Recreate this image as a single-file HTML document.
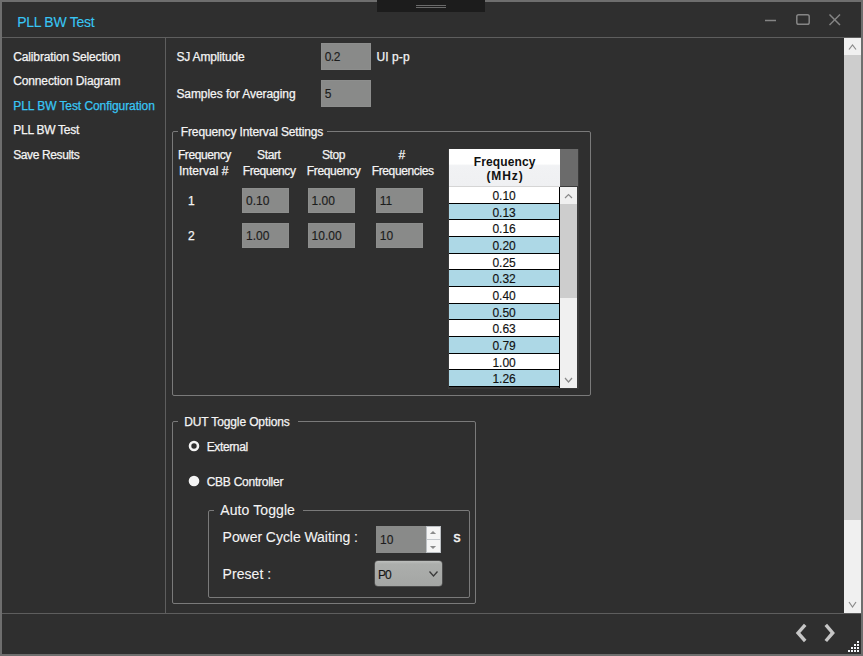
<!DOCTYPE html>
<html><head><meta charset="utf-8"><style>
html,body{margin:0;padding:0;width:863px;height:656px;overflow:hidden;background:#2f2f2f;}
body{position:relative;font-family:"Liberation Sans",sans-serif;}
.t{position:absolute;white-space:nowrap;}
</style></head><body>
<div style="position:absolute;left:0px;top:0px;width:863px;height:656px;background:#6e6e6e;"></div>
<div style="position:absolute;left:2px;top:2px;width:859px;height:652px;background:#2f2f2f;"></div>
<div style="position:absolute;left:377px;top:0px;width:108px;height:12px;background:#1c1c1c;"></div>
<div style="position:absolute;left:416px;top:5px;width:30px;height:1px;background:#6a6a6a;"></div>
<div style="position:absolute;left:416px;top:7px;width:30px;height:1px;background:#6a6a6a;"></div>
<div class="t" style="left:17.2px;top:15px;font-size:14px;line-height:14px;color:#38c6f4;font-weight:400;letter-spacing:-0.28px;-webkit-text-stroke:0.1px #38c6f4;">PLL BW Test</div>
<svg style="position:absolute;left:0;top:0" width="863" height="40">
<g stroke="#858585" fill="none" stroke-width="1.5">
<line x1="765" y1="20.5" x2="776" y2="20.5"/>
<rect x="796.8" y="14.8" width="12.4" height="9.4" rx="1.8"/>
<line x1="829.5" y1="14.5" x2="840" y2="25"/>
<line x1="840" y1="14.5" x2="829.5" y2="25"/>
</g></svg>
<div style="position:absolute;left:2px;top:37px;width:859px;height:1px;background:#5e5e5e;"></div>
<div style="position:absolute;left:165px;top:38px;width:1px;height:575px;background:#5e5e5e;"></div>
<div style="position:absolute;left:2px;top:613px;width:859px;height:1px;background:#5e5e5e;"></div>
<div class="t" style="left:13.3px;top:51px;font-size:12px;line-height:12px;color:#f4f4f4;font-weight:400;letter-spacing:-0.15px;-webkit-text-stroke:0.25px #f4f4f4;">Calibration Selection</div>
<div class="t" style="left:13.2px;top:75px;font-size:12px;line-height:12px;color:#f4f4f4;font-weight:400;letter-spacing:-0.129px;-webkit-text-stroke:0.25px #f4f4f4;">Connection Diagram</div>
<div class="t" style="left:13.3px;top:100px;font-size:12px;line-height:12px;color:#38c6f4;font-weight:400;letter-spacing:-0.079px;-webkit-text-stroke:0.25px #38c6f4;">PLL BW Test Configuration</div>
<div class="t" style="left:13.3px;top:124px;font-size:12px;line-height:12px;color:#f4f4f4;font-weight:400;letter-spacing:-0.27px;-webkit-text-stroke:0.25px #f4f4f4;">PLL BW Test</div>
<div class="t" style="left:13.2px;top:149px;font-size:12px;line-height:12px;color:#f4f4f4;font-weight:400;letter-spacing:-0.373px;-webkit-text-stroke:0.25px #f4f4f4;">Save Results</div>
<div style="position:absolute;left:844px;top:38px;width:17px;height:575px;background:#f0f0f0;"></div>
<div style="position:absolute;left:844px;top:55px;width:17px;height:465px;background:#cdcdcd;"></div>
<svg style="position:absolute;left:844px;top:38px" width="17" height="575">
<g stroke="#8a8a8a" fill="none" stroke-width="1.2">
<polyline points="5,11.5 8.5,7 12,11.5"/>
<polyline points="5,564 8.5,569 12,564"/>
</g></svg>
<svg style="position:absolute;left:780px;top:614px" width="83" height="42">
<g stroke="#c6c6c6" fill="none" stroke-width="3.4" stroke-linecap="butt">
<polyline points="25.2,10.9 18.05,18.95 25.2,27"/>
<polyline points="45.8,10.9 52.7,18.95 45.8,27"/>
</g>
</svg>
<div style="position:absolute;left:857px;top:641px;width:2px;height:2px;background:#f4f6fa;"></div>
<div style="position:absolute;left:854px;top:644px;width:2px;height:2px;background:#f4f6fa;"></div>
<div style="position:absolute;left:857px;top:644px;width:2px;height:2px;background:#f4f6fa;"></div>
<div style="position:absolute;left:851px;top:647px;width:2px;height:2px;background:#f4f6fa;"></div>
<div style="position:absolute;left:854px;top:647px;width:2px;height:2px;background:#f4f6fa;"></div>
<div style="position:absolute;left:857px;top:647px;width:2px;height:2px;background:#f4f6fa;"></div>
<div style="position:absolute;left:848px;top:650px;width:2px;height:2px;background:#f4f6fa;"></div>
<div style="position:absolute;left:851px;top:650px;width:2px;height:2px;background:#f4f6fa;"></div>
<div style="position:absolute;left:854px;top:650px;width:2px;height:2px;background:#f4f6fa;"></div>
<div style="position:absolute;left:857px;top:650px;width:2px;height:2px;background:#f4f6fa;"></div>
<div class="t" style="left:176.4px;top:51px;font-size:12px;line-height:12px;color:#f4f4f4;font-weight:400;letter-spacing:-0.155px;-webkit-text-stroke:0.25px #f4f4f4;">SJ Amplitude</div>
<div class="t" style="left:176.4px;top:88px;font-size:12px;line-height:12px;color:#f4f4f4;font-weight:400;letter-spacing:-0.065px;-webkit-text-stroke:0.25px #f4f4f4;">Samples for Averaging</div>
<div style="position:absolute;left:321px;top:43px;width:50px;height:27px;background:#898a89;box-sizing:border-box;border:1px solid #8d8e8d;"></div>
<div class="t" style="left:324.7px;top:51px;font-size:12px;line-height:12px;color:#1c1c1c;font-weight:400;letter-spacing:-0.5px;-webkit-text-stroke:0.15px #1c1c1c;">0.2</div>
<div style="position:absolute;left:321px;top:80px;width:50px;height:27px;background:#898a89;box-sizing:border-box;border:1px solid #8d8e8d;"></div>
<div class="t" style="left:324.7px;top:88px;font-size:12px;line-height:12px;color:#1c1c1c;font-weight:400;letter-spacing:0px;-webkit-text-stroke:0.15px #1c1c1c;">5</div>
<div class="t" style="left:376.5px;top:51px;font-size:12px;line-height:12px;color:#f4f4f4;font-weight:400;letter-spacing:0.08px;-webkit-text-stroke:0.25px #f4f4f4;">UI p-p</div>
<div style="position:absolute;left:172px;top:131px;width:419px;height:265px;box-sizing:border-box;border:1px solid #7a7a7a;border-radius:2px;"></div>
<div style="position:absolute;left:178px;top:130px;width:149px;height:3px;background:#2f2f2f;"></div>
<div class="t" style="left:180.8px;top:126px;font-size:12px;line-height:12px;color:#f4f4f4;font-weight:400;letter-spacing:-0.135px;-webkit-text-stroke:0.25px #f4f4f4;">Frequency Interval Settings</div>
<div class="t" style="left:177.9px;top:149px;font-size:12px;line-height:12px;color:#f4f4f4;font-weight:400;letter-spacing:-0.413px;-webkit-text-stroke:0.25px #f4f4f4;">Frequency</div>
<div class="t" style="left:179px;top:165px;font-size:12px;line-height:12px;color:#f4f4f4;font-weight:400;letter-spacing:0.0px;-webkit-text-stroke:0.25px #f4f4f4;">Interval #</div>
<div class="t" style="left:257px;top:149px;font-size:12px;line-height:12px;color:#f4f4f4;font-weight:400;letter-spacing:-0.35px;-webkit-text-stroke:0.25px #f4f4f4;">Start</div>
<div class="t" style="left:242.8px;top:165px;font-size:12px;line-height:12px;color:#f4f4f4;font-weight:400;letter-spacing:-0.45px;-webkit-text-stroke:0.25px #f4f4f4;">Frequency</div>
<div class="t" style="left:321.9px;top:149px;font-size:12px;line-height:12px;color:#f4f4f4;font-weight:400;letter-spacing:-0.4px;-webkit-text-stroke:0.25px #f4f4f4;">Stop</div>
<div class="t" style="left:306.8px;top:165px;font-size:12px;line-height:12px;color:#f4f4f4;font-weight:400;letter-spacing:-0.35px;-webkit-text-stroke:0.25px #f4f4f4;">Frequency</div>
<div class="t" style="left:398.5px;top:149px;font-size:12px;line-height:12px;color:#f4f4f4;font-weight:400;letter-spacing:0px;-webkit-text-stroke:0.25px #f4f4f4;">#</div>
<div class="t" style="left:371.7px;top:165px;font-size:12px;line-height:12px;color:#f4f4f4;font-weight:400;letter-spacing:-0.37px;-webkit-text-stroke:0.25px #f4f4f4;">Frequencies</div>
<div class="t" style="left:188px;top:195px;font-size:12px;line-height:12px;color:#f4f4f4;font-weight:400;letter-spacing:0px;-webkit-text-stroke:0.25px #f4f4f4;">1</div>
<div class="t" style="left:188px;top:230px;font-size:12px;line-height:12px;color:#f4f4f4;font-weight:400;letter-spacing:0px;-webkit-text-stroke:0.25px #f4f4f4;">2</div>
<div style="position:absolute;left:242px;top:188px;width:47px;height:25px;background:#898a89;box-sizing:border-box;border:1px solid #8d8e8d;"></div>
<div style="position:absolute;left:308px;top:188px;width:47px;height:25px;background:#898a89;box-sizing:border-box;border:1px solid #8d8e8d;"></div>
<div style="position:absolute;left:376px;top:188px;width:47px;height:25px;background:#898a89;box-sizing:border-box;border:1px solid #8d8e8d;"></div>
<div style="position:absolute;left:242px;top:223px;width:47px;height:25px;background:#898a89;box-sizing:border-box;border:1px solid #8d8e8d;"></div>
<div style="position:absolute;left:308px;top:223px;width:47px;height:25px;background:#898a89;box-sizing:border-box;border:1px solid #8d8e8d;"></div>
<div style="position:absolute;left:376px;top:223px;width:47px;height:25px;background:#898a89;box-sizing:border-box;border:1px solid #8d8e8d;"></div>
<div class="t" style="left:246px;top:195px;font-size:12px;line-height:12px;color:#1c1c1c;font-weight:400;letter-spacing:0px;-webkit-text-stroke:0.15px #1c1c1c;">0.10</div>
<div class="t" style="left:311.6px;top:195px;font-size:12px;line-height:12px;color:#1c1c1c;font-weight:400;letter-spacing:0px;-webkit-text-stroke:0.15px #1c1c1c;">1.00</div>
<div class="t" style="left:379.8px;top:195px;font-size:12px;line-height:12px;color:#1c1c1c;font-weight:400;letter-spacing:0px;-webkit-text-stroke:0.15px #1c1c1c;">11</div>
<div class="t" style="left:246px;top:230px;font-size:12px;line-height:12px;color:#1c1c1c;font-weight:400;letter-spacing:0px;-webkit-text-stroke:0.15px #1c1c1c;">1.00</div>
<div class="t" style="left:311.6px;top:230px;font-size:12px;line-height:12px;color:#1c1c1c;font-weight:400;letter-spacing:0px;-webkit-text-stroke:0.15px #1c1c1c;">10.00</div>
<div class="t" style="left:379.8px;top:230px;font-size:12px;line-height:12px;color:#1c1c1c;font-weight:400;letter-spacing:0px;-webkit-text-stroke:0.15px #1c1c1c;">10</div>
<div style="position:absolute;left:448px;top:149px;width:131px;height:240px;background:#3a3a3a;"></div>
<div style="position:absolute;left:449px;top:149px;width:111px;height:37px;background:linear-gradient(#ffffff 0,#ffffff 40%,#f1f2f4 45%,#eff0f2 100%);"></div>
<div style="position:absolute;left:449px;top:186px;width:111px;height:1px;background:#d5d5d5;"></div>
<div style="position:absolute;left:560px;top:149px;width:18px;height:37px;background:#6b6b6b;"></div>
<div class="t" style="left:473.7px;top:156px;font-size:12px;line-height:12px;color:#111111;font-weight:700;letter-spacing:0.125px;">Frequency</div>
<div class="t" style="left:486.5px;top:169.5px;font-size:12px;line-height:12px;color:#111111;font-weight:700;letter-spacing:0.875px;">(MHz)</div>
<div style="position:absolute;left:449px;top:187px;width:111px;height:201px;overflow:hidden;"><div style="position:absolute;left:0;top:0.00px;width:110px;height:16.67px;background:#ffffff;"></div><div style="position:absolute;left:0;top:15.67px;width:111px;height:1px;background:#000;"></div><div class="t" style="left:0.10000000000000142px;width:110px;text-align:center;top:3.0px;font-size:12px;line-height:12px;color:#111;font-weight:400;letter-spacing:0px;-webkit-text-stroke:0.15px #111">0.10</div>
<div style="position:absolute;left:0;top:16.67px;width:110px;height:16.67px;background:#add8e6;"></div><div style="position:absolute;left:0;top:32.33px;width:111px;height:1px;background:#000;"></div><div class="t" style="left:0.10000000000000142px;width:110px;text-align:center;top:19.666666666666668px;font-size:12px;line-height:12px;color:#111;font-weight:400;letter-spacing:0px;-webkit-text-stroke:0.15px #111">0.13</div>
<div style="position:absolute;left:0;top:33.33px;width:110px;height:16.67px;background:#ffffff;"></div><div style="position:absolute;left:0;top:49.00px;width:111px;height:1px;background:#000;"></div><div class="t" style="left:0.10000000000000142px;width:110px;text-align:center;top:36.333333333333336px;font-size:12px;line-height:12px;color:#111;font-weight:400;letter-spacing:0px;-webkit-text-stroke:0.15px #111">0.16</div>
<div style="position:absolute;left:0;top:50.00px;width:110px;height:16.67px;background:#add8e6;"></div><div style="position:absolute;left:0;top:65.67px;width:111px;height:1px;background:#000;"></div><div class="t" style="left:0.10000000000000142px;width:110px;text-align:center;top:53.0px;font-size:12px;line-height:12px;color:#111;font-weight:400;letter-spacing:0px;-webkit-text-stroke:0.15px #111">0.20</div>
<div style="position:absolute;left:0;top:66.67px;width:110px;height:16.67px;background:#ffffff;"></div><div style="position:absolute;left:0;top:82.33px;width:111px;height:1px;background:#000;"></div><div class="t" style="left:0.10000000000000142px;width:110px;text-align:center;top:69.66666666666667px;font-size:12px;line-height:12px;color:#111;font-weight:400;letter-spacing:0px;-webkit-text-stroke:0.15px #111">0.25</div>
<div style="position:absolute;left:0;top:83.33px;width:110px;height:16.67px;background:#add8e6;"></div><div style="position:absolute;left:0;top:99.00px;width:111px;height:1px;background:#000;"></div><div class="t" style="left:0.10000000000000142px;width:110px;text-align:center;top:86.33333333333334px;font-size:12px;line-height:12px;color:#111;font-weight:400;letter-spacing:0px;-webkit-text-stroke:0.15px #111">0.32</div>
<div style="position:absolute;left:0;top:100.00px;width:110px;height:16.67px;background:#ffffff;"></div><div style="position:absolute;left:0;top:115.67px;width:111px;height:1px;background:#000;"></div><div class="t" style="left:0.10000000000000142px;width:110px;text-align:center;top:103.0px;font-size:12px;line-height:12px;color:#111;font-weight:400;letter-spacing:0px;-webkit-text-stroke:0.15px #111">0.40</div>
<div style="position:absolute;left:0;top:116.67px;width:110px;height:16.67px;background:#add8e6;"></div><div style="position:absolute;left:0;top:132.33px;width:111px;height:1px;background:#000;"></div><div class="t" style="left:0.10000000000000142px;width:110px;text-align:center;top:119.66666666666669px;font-size:12px;line-height:12px;color:#111;font-weight:400;letter-spacing:0px;-webkit-text-stroke:0.15px #111">0.50</div>
<div style="position:absolute;left:0;top:133.33px;width:110px;height:16.67px;background:#ffffff;"></div><div style="position:absolute;left:0;top:149.00px;width:111px;height:1px;background:#000;"></div><div class="t" style="left:0.10000000000000142px;width:110px;text-align:center;top:136.33333333333334px;font-size:12px;line-height:12px;color:#111;font-weight:400;letter-spacing:0px;-webkit-text-stroke:0.15px #111">0.63</div>
<div style="position:absolute;left:0;top:150.00px;width:110px;height:16.67px;background:#add8e6;"></div><div style="position:absolute;left:0;top:165.67px;width:111px;height:1px;background:#000;"></div><div class="t" style="left:0.10000000000000142px;width:110px;text-align:center;top:153.0px;font-size:12px;line-height:12px;color:#111;font-weight:400;letter-spacing:0px;-webkit-text-stroke:0.15px #111">0.79</div>
<div style="position:absolute;left:0;top:166.67px;width:110px;height:16.67px;background:#ffffff;"></div><div style="position:absolute;left:0;top:182.33px;width:111px;height:1px;background:#000;"></div><div class="t" style="left:0.10000000000000142px;width:110px;text-align:center;top:169.66666666666669px;font-size:12px;line-height:12px;color:#111;font-weight:400;letter-spacing:0px;-webkit-text-stroke:0.15px #111">1.00</div>
<div style="position:absolute;left:0;top:183.33px;width:110px;height:16.67px;background:#add8e6;"></div><div style="position:absolute;left:0;top:199.00px;width:111px;height:1px;background:#000;"></div><div class="t" style="left:0.10000000000000142px;width:110px;text-align:center;top:186.33333333333334px;font-size:12px;line-height:12px;color:#111;font-weight:400;letter-spacing:0px;-webkit-text-stroke:0.15px #111">1.26</div>
<div style="position:absolute;left:110px;top:0;width:1px;height:201px;background:#000;"></div></div>
<div style="position:absolute;left:560px;top:187px;width:17px;height:201px;background:#f0f0f0;"></div>
<div style="position:absolute;left:560px;top:204px;width:17px;height:94px;background:#cdcdcd;"></div>
<svg style="position:absolute;left:560px;top:187px" width="17" height="201">
<g stroke="#8a8a8a" fill="none" stroke-width="1.2">
<polyline points="5,11 8.5,7.5 12,11"/>
<polyline points="5,191 8.5,195 12,191"/>
</g></svg>
<div style="position:absolute;left:172px;top:421px;width:304px;height:183px;box-sizing:border-box;border:1px solid #7a7a7a;border-radius:2px;"></div>
<div style="position:absolute;left:178px;top:420px;width:120px;height:3px;background:#2f2f2f;"></div>
<div class="t" style="left:184.2px;top:416px;font-size:12px;line-height:12px;color:#f4f4f4;font-weight:400;letter-spacing:-0.118px;-webkit-text-stroke:0.25px #f4f4f4;">DUT Toggle Options</div>
<svg style="position:absolute;left:185px;top:437px" width="20" height="55">
<circle cx="9" cy="9" r="4.0" fill="none" stroke="#f4f4f4" stroke-width="2.6"/>
<circle cx="9" cy="44" r="5.3" fill="#f4f4f4"/>
</svg>
<div class="t" style="left:206.7px;top:441px;font-size:12px;line-height:12px;color:#f4f4f4;font-weight:400;letter-spacing:-0.371px;-webkit-text-stroke:0.25px #f4f4f4;">External</div>
<div class="t" style="left:206.7px;top:476px;font-size:12px;line-height:12px;color:#f4f4f4;font-weight:400;letter-spacing:-0.254px;-webkit-text-stroke:0.25px #f4f4f4;">CBB Controller</div>
<div style="position:absolute;left:208px;top:510px;width:262px;height:88px;box-sizing:border-box;border:1px solid #7a7a7a;border-radius:2px;"></div>
<div style="position:absolute;left:214px;top:509px;width:89px;height:3px;background:#2f2f2f;"></div>
<div class="t" style="left:220.3px;top:503px;font-size:14px;line-height:14px;color:#f4f4f4;font-weight:400;letter-spacing:0.09px;-webkit-text-stroke:0.1px #f4f4f4;">Auto Toggle</div>
<div class="t" style="left:222.6px;top:530px;font-size:14px;line-height:14px;color:#f4f4f4;font-weight:400;letter-spacing:-0.05px;-webkit-text-stroke:0.1px #f4f4f4;">Power Cycle Waiting :</div>
<div class="t" style="left:222.6px;top:567px;font-size:14px;line-height:14px;color:#f4f4f4;font-weight:400;letter-spacing:0.057px;-webkit-text-stroke:0.1px #f4f4f4;">Preset :</div>
<div style="position:absolute;left:376px;top:526px;width:65px;height:27px;background:#898a89;"></div>
<div style="position:absolute;left:426px;top:526px;width:15px;height:27px;background:#f5f5f5;box-sizing:border-box;border:1px solid #bcc0c4;"></div>
<div style="position:absolute;left:427px;top:539px;width:13px;height:1px;background:#c4c8cc;"></div>
<svg style="position:absolute;left:426px;top:526px" width="15" height="27">
<polygon points="3.9,8 7,5 10.1,8" fill="#8c8c8c"/>
<polygon points="3.9,20 7,23 10.1,20" fill="#8c8c8c"/>
</svg>
<div class="t" style="left:380.1px;top:534px;font-size:12px;line-height:12px;color:#1c1c1c;font-weight:400;letter-spacing:0px;-webkit-text-stroke:0.15px #1c1c1c;">10</div>
<div class="t" style="left:453.6px;top:530px;font-size:14px;line-height:14px;color:#f4f4f4;font-weight:400;letter-spacing:0px;-webkit-text-stroke:0.5px #f4f4f4;">s</div>
<div style="position:absolute;left:375px;top:561px;width:67px;height:25px;background:linear-gradient(#bdbfbd 0,#acaeac 3px,#a4a6a4 100%);border-radius:3px;box-shadow:0 0 0 0.5px #6a6a6a;"></div>
<div class="t" style="left:378px;top:569px;font-size:12px;line-height:12px;color:#151515;font-weight:400;letter-spacing:-1.0px;-webkit-text-stroke:0.15px #151515;">P0</div>
<svg style="position:absolute;left:428px;top:569px" width="12" height="10">
<polyline points="1.5,2.5 5.5,7 9.5,2.5" fill="none" stroke="#3a3a3a" stroke-width="1.3"/>
</svg>

</body></html>
